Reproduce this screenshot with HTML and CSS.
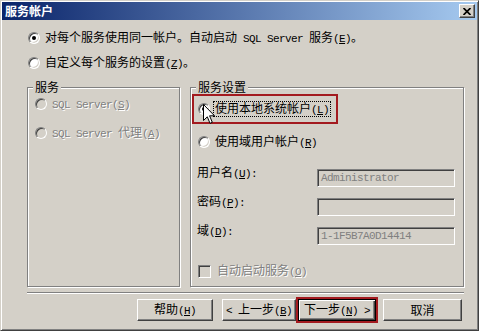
FILE: index.html
```html
<!DOCTYPE html>
<html lang="zh-CN">
<head>
<meta charset="utf-8">
<title>服务帐户</title>
<link rel="stylesheet" href="styles.css">
</head>
<body>
<div class="window">
  <div class="titlebar">
    <span class="title">服务帐户</span>
    <span class="close"><svg width="8" height="7" viewBox="0 0 8 7"><path d="M0.5 0 L7.5 7 M7.5 0 L0.5 7" stroke="#000" stroke-width="1.7" fill="none"/></svg></span>
  </div>
  <div class="body">
    <div class="opt opt1"><span class="radio checked"></span><span class="label">对每个服务使用同一帐户。自动启动<span class="en"> SQL Server </span>服务<span class="en">(<u>E</u>)</span>。</span></div>
    <div class="opt opt2"><span class="radio"></span><span class="label">自定义每个服务的设置<span class="en">(<u>Z</u>)</span>。</span></div>
    <div class="groups">
      <fieldset class="group services">
        <legend>服务</legend>
        <div class="opt svc svc1"><span class="radio disabled"></span><span class="label dis"><span class="en">SQL Server(<u>S</u>)</span></span></div>
        <div class="opt svc svc2"><span class="radio disabled"></span><span class="label dis"><span class="en">SQL Server </span>代理<span class="en">(<u>A</u>)</span></span></div>
      </fieldset>
      <fieldset class="group settings">
        <legend>服务设置</legend>
        <div class="highlight">
          <span class="radio checked"></span><span class="label focus">使用本地系统帐户<span class="en">(<u>L</u>)</span></span>
          <svg class="cursor" width="12" height="20" viewBox="0 0 12 20"><path d="M0.5 0.5 V16.5 L4.3 12.8 L7 19.3 L9.3 18.3 L6.6 11.8 H11.5 Z" fill="#fff" stroke="#000" stroke-width="1" stroke-linejoin="miter"/></svg>
        </div>
        <div class="opt dom"><span class="radio"></span><span class="label">使用域用户帐户<span class="en">(<u>R</u>)</span></span></div>
        <div class="fields">
          <span class="flabel">用户名<span class="en">(<u>U</u>):</span></span>
          <div class="edit">Administrator</div>
          <span class="flabel">密码<span class="en">(<u>P</u>):</span></span>
          <div class="edit"></div>
          <span class="flabel">域<span class="en">(<u>D</u>):</span></span>
          <div class="edit">1-1F5B7A0D14414</div>
        </div>
        <div class="opt check-row"><span class="check"></span><span class="label dis">自动启动服务<span class="en">(<u>O</u>)</span></span></div>
      </fieldset>
    </div>
    <div class="sep"></div>
    <div class="buttons">
      <div class="btn help"><span>帮助<span class="en">(<u>H</u>)</span></span></div>
      <div class="btn back"><span><span class="en">&lt; </span>上一步<span class="en">(<u>B</u>)</span></span></div>
      <div class="next-wrap"><div class="btn next"><span>下一步<span class="en">(<u>N</u>) &gt;</span></span></div></div>
      <div class="btn cancel"><span>取消</span></div>
    </div>
  </div>
</div>
</body>
</html>
```

FILE: styles.css
```css
* { box-sizing: border-box; }
html, body { margin: 0; padding: 0; }
body {
  width: 479px;
  height: 331px;
  overflow: hidden;
  background: #d4d0c8;
  font-family: "Noto Sans CJK SC", sans-serif;
  font-size: 12px;
  color: #000;
}
.window {
  width: 479px;
  height: 331px;
  border: 1px solid;
  border-color: #d4d0c8 #404040 #404040 #d4d0c8;
  box-shadow: inset 1px 1px #fff, inset -1px -1px #808080;
  padding: 1px;
  background: #d4d0c8;
}
.titlebar {
  height: 18px;
  display: flex;
  align-items: center;
  justify-content: space-between;
  background: linear-gradient(to right, #0a246a, #a6caf0);
  padding: 0 2px 0 3px;
}
.title {
  color: #fff;
  font-weight: bold;
  line-height: 16px;
}
.close {
  width: 16px;
  height: 14px;
  background: #d4d0c8;
  border: 1px solid;
  border-color: #fff #404040 #404040 #fff;
  box-shadow: inset -1px -1px #808080;
  display: flex;
  align-items: center;
  justify-content: center;
}
.close svg { display: block; }
.body { position: relative; }
.en {
  font-family: "Liberation Mono", monospace;
  font-size: 11px;
  letter-spacing: -0.6px;
}
.opt {
  display: flex;
  align-items: center;
  height: 16px;
  line-height: 16px;
  white-space: nowrap;
}
.opt1 { margin: 10px 0 0 26px; }
.opt2 { margin: 9px 0 0 26px; }
.radio {
  flex: none;
  position: relative;
  width: 12px;
  height: 12px;
  border-radius: 50%;
  border: 1px solid;
  border-color: #808080 #fff #fff #808080;
  box-shadow: inset 1px 1px #404040, inset -1px -1px #d4d0c8;
  background: #fff;
  margin-right: 5px;
}
.radio.checked::after {
  content: "";
  position: absolute;
  left: 3px;
  top: 3px;
  width: 4px;
  height: 4px;
  border-radius: 50%;
  background: #000;
}
.radio.disabled { background: #d4d0c8; }
.dis {
  color: #808080;
  text-shadow: 1px 1px 0 #fff;
}
.groups {
  display: flex;
  gap: 10px;
  margin: 9px 0 0 25px;
}
.group {
  margin: 0;
  padding: 0;
  min-width: 0;
  height: 207px;
  border: 1px solid #808080;
  box-shadow: inset 1px 1px #fff, 1px 1px #fff;
}
.group legend {
  padding: 0 2px;
  margin-left: 5px;
  line-height: 14px;
  background: #d4d0c8;
}
.services { width: 153px; }
.settings { width: 274px; }
.svc { margin-left: 7px; }
.svc1 { margin-top: 2px; }
.svc2 { margin-top: 13px; }
.highlight {
  position: relative;
  display: flex;
  align-items: center;
  width: 146px;
  height: 30px;
  margin-left: 1px;
  padding-left: 4px;
  border: 2px solid #a31a1f;
}
.focus {
  border: 1px dotted #000;
  line-height: 12px;
  padding: 0 1px;
  margin-left: -2px;
}
.cursor {
  position: absolute;
  left: 9px;
  top: 8px;
}
.dom { margin: 10px 0 0 7px; }
.fields {
  display: grid;
  grid-template-columns: 120px 138px;
  row-gap: 11px;
  margin: 19px 0 0 6px;
}
.flabel {
  align-self: start;
  line-height: 16px;
  margin-top: -5px;
  white-space: nowrap;
}
.edit {
  height: 18px;
  border: 1px solid;
  border-color: #808080 #fff #fff #808080;
  box-shadow: inset 1px 1px #404040, inset -1px -1px #d4d0c8;
  background: #d4d0c8;
  color: #808080;
  font-family: "Liberation Mono", monospace;
  font-size: 11px;
  letter-spacing: -0.6px;
  line-height: 16px;
  padding-left: 3px;
  white-space: nowrap;
}
.check-row { margin: 18px 0 0 7px; }
.check {
  flex: none;
  width: 13px;
  height: 13px;
  border: 1px solid;
  border-color: #808080 #fff #fff #808080;
  box-shadow: inset 1px 1px #404040, inset -1px -1px #d4d0c8;
  background: #d4d0c8;
  margin-right: 6px;
}
.sep {
  width: 437px;
  height: 2px;
  margin: 5px 0 0 25px;
  border-top: 1px solid #808080;
  border-bottom: 1px solid #fff;
}
.buttons {
  display: flex;
  align-items: center;
  height: 22px;
  margin-top: 5px;
  padding-left: 135px;
}
.btn {
  flex: none;
  height: 22px;
  display: flex;
  align-items: center;
  justify-content: center;
  line-height: 16px;
  white-space: nowrap;
  background: #d4d0c8;
  border: 1px solid;
  border-color: #fff #404040 #404040 #fff;
  box-shadow: inset -1px -1px #808080;
}
.help { width: 76px; margin-right: 9px; }
.back { width: 74px; }
.next-wrap {
  flex: none;
  width: 82px;
  height: 26px;
  border: 2px solid #a31a1f;
}
.btn.next {
  width: 78px;
  border: 1px solid #000;
  box-shadow: inset 1px 1px #fff, inset -1px -1px #404040, inset -2px -2px #808080;
}
.cancel { width: 79px; margin-left: 5px; }
```
